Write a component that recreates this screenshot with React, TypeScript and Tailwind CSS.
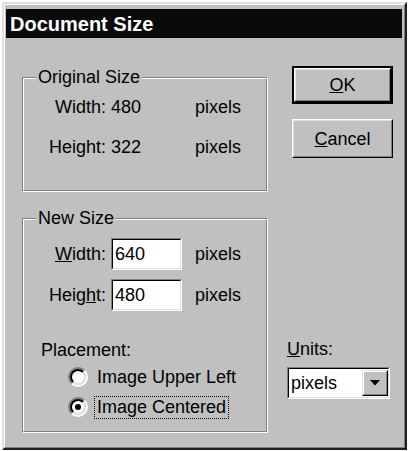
import React from 'react';

const Sunken: React.FC<{ className?: string; children?: React.ReactNode }> = ({ className = '', children }) => (
  <div className={`border border-t-[#808080] border-l-[#808080] border-r-white border-b-white ${className}`}>
    <div className="h-full flex items-center border border-t-black border-l-black border-r-[#dfdfdf] border-b-[#dfdfdf] bg-white">
      {children}
    </div>
  </div>
);

const Group: React.FC<{ label: string; className?: string; children?: React.ReactNode }> = ({ label, className = '', children }) => (
  <div className={`relative border border-t-[#808080] border-l-[#808080] border-r-white border-b-white ${className}`}>
    <div className="h-full border border-t-white border-l-white border-r-[#808080] border-b-[#808080]">{children}</div>
    <span className="absolute -top-[11px] left-[13px] bg-[#c0c0c0] px-[2px] leading-[20px]">{label}</span>
  </div>
);

const Radio: React.FC<{ checked?: boolean }> = ({ checked }) => (
  <span className="w-[20px] h-[20px] rounded-full border-2 border-t-[#808080] border-l-[#808080] border-r-white border-b-white flex">
    <span className="flex-1 rounded-full border-2 border-t-black border-l-black border-r-[#dfdfdf] border-b-[#dfdfdf] bg-white flex items-center justify-center">
      {checked && <span className="w-[6px] h-[6px] rounded-full bg-black" />}
    </span>
  </span>
);

const Button: React.FC<{ isDefault?: boolean; className?: string; children?: React.ReactNode }> = ({ isDefault, className = '', children }) => (
  <div className={`${isDefault ? 'border-2 border-black' : ''} ${className}`}>
    <div className="h-full border border-t-white border-l-white border-r-black border-b-black">
      <div className="h-full flex items-center justify-center border border-t-[#dfdfdf] border-l-[#dfdfdf] border-r-[#808080] border-b-[#808080] bg-[#c0c0c0]">
        {children}
      </div>
    </div>
  </div>
);

export default function App() {
  return (
    <div className="w-[409px] h-[451px] bg-white pl-[2px] pt-[2px] text-black text-[18px] leading-[20px] font-['Liberation_Sans',Arial,sans-serif]">
      <div className="w-[405px] h-[448px] border-2 border-t-[#dfdfdf] border-l-[#dfdfdf] border-r-[#202020] border-b-[#202020]">
        <div className="h-full border border-t-white border-l-white border-r-[#808080] border-b-[#808080] bg-[#c0c0c0] pl-[1px] pr-[2px] pt-[4px]">
          {/* Title bar */}
          <div className="h-[29px] bg-[#0a0a0a] flex items-center pl-[4px] text-white font-bold text-[20px]">Document Size</div>

          <div className="flex pl-[16px]">
            {/* Left column */}
            <div className="w-[246px] mt-[39px]">
              <Group label="Original Size" className="h-[115px]">
                <div className="pt-[18px]">
                  <div className="flex">
                    <span className="w-[82px] text-right">Width:</span>
                    <span className="w-[89px] pl-[5px]">480</span>
                    <span>pixels</span>
                  </div>
                  <div className="flex mt-[20px]">
                    <span className="w-[82px] text-right">Height:</span>
                    <span className="w-[89px] pl-[5px]">322</span>
                    <span>pixels</span>
                  </div>
                </div>
              </Group>

              <Group label="New Size" className="h-[215px] mt-[26px]">
                <div className="pt-[18px]">
                  <div className="flex items-center">
                    <span className="w-[82px] text-right"><u>W</u>idth:</span>
                    <Sunken className="ml-[5px] w-[71px] h-[32px]">
                      <span className="pl-[2px]">640</span>
                    </Sunken>
                    <span className="ml-[13px]">pixels</span>
                  </div>
                  <div className="flex items-center mt-[9px]">
                    <span className="w-[82px] text-right">Heig<u>h</u>t:</span>
                    <Sunken className="ml-[5px] w-[71px] h-[32px]">
                      <span className="pl-[2px]">480</span>
                    </Sunken>
                    <span className="ml-[13px]">pixels</span>
                  </div>

                  <div className="pl-[17px] mt-[29px]">Placement:</div>
                  <div className="flex items-center pl-[44px] mt-[5px] h-[24px] gap-[6px]">
                    <Radio />
                    <span className="border border-transparent px-[2px] leading-[21px]">Image Upper Left</span>
                  </div>
                  <div className="flex items-center pl-[44px] mt-[6px] h-[24px] gap-[6px]">
                    <Radio checked />
                    <span className="border border-dotted border-black px-[2px] leading-[21px]">Image Centered</span>
                  </div>
                </div>
              </Group>
            </div>

            {/* Right column */}
            <div className="ml-[19px] w-[106px]">
              <Button isDefault className="ml-[5px] mt-[28px] w-[101px] h-[38px]">
                <span><u>O</u>K</span>
              </Button>
              <Button className="ml-[5px] mt-[15px] w-[101px] h-[39px]">
                <span><u>C</u>ancel</span>
              </Button>

              <div className="mt-[181px]"><u>U</u>nits:</div>
              <Sunken className="mt-[8px] w-[103px] h-[32px]">
                <span className="flex-1 pl-[2px]">pixels</span>
                <div className="w-[26px] h-[26px] border border-t-[#dfdfdf] border-l-[#dfdfdf] border-r-black border-b-black">
                  <div className="h-full flex items-center justify-center border border-t-white border-l-white border-r-[#808080] border-b-[#808080] bg-[#c0c0c0]">
                    <svg width="10" height="6" viewBox="0 0 10 6">
                      <polygon points="0,0 10,0 5,5.5" fill="black" />
                    </svg>
                  </div>
                </div>
              </Sunken>
            </div>
          </div>
        </div>
      </div>
    </div>
  );
}
